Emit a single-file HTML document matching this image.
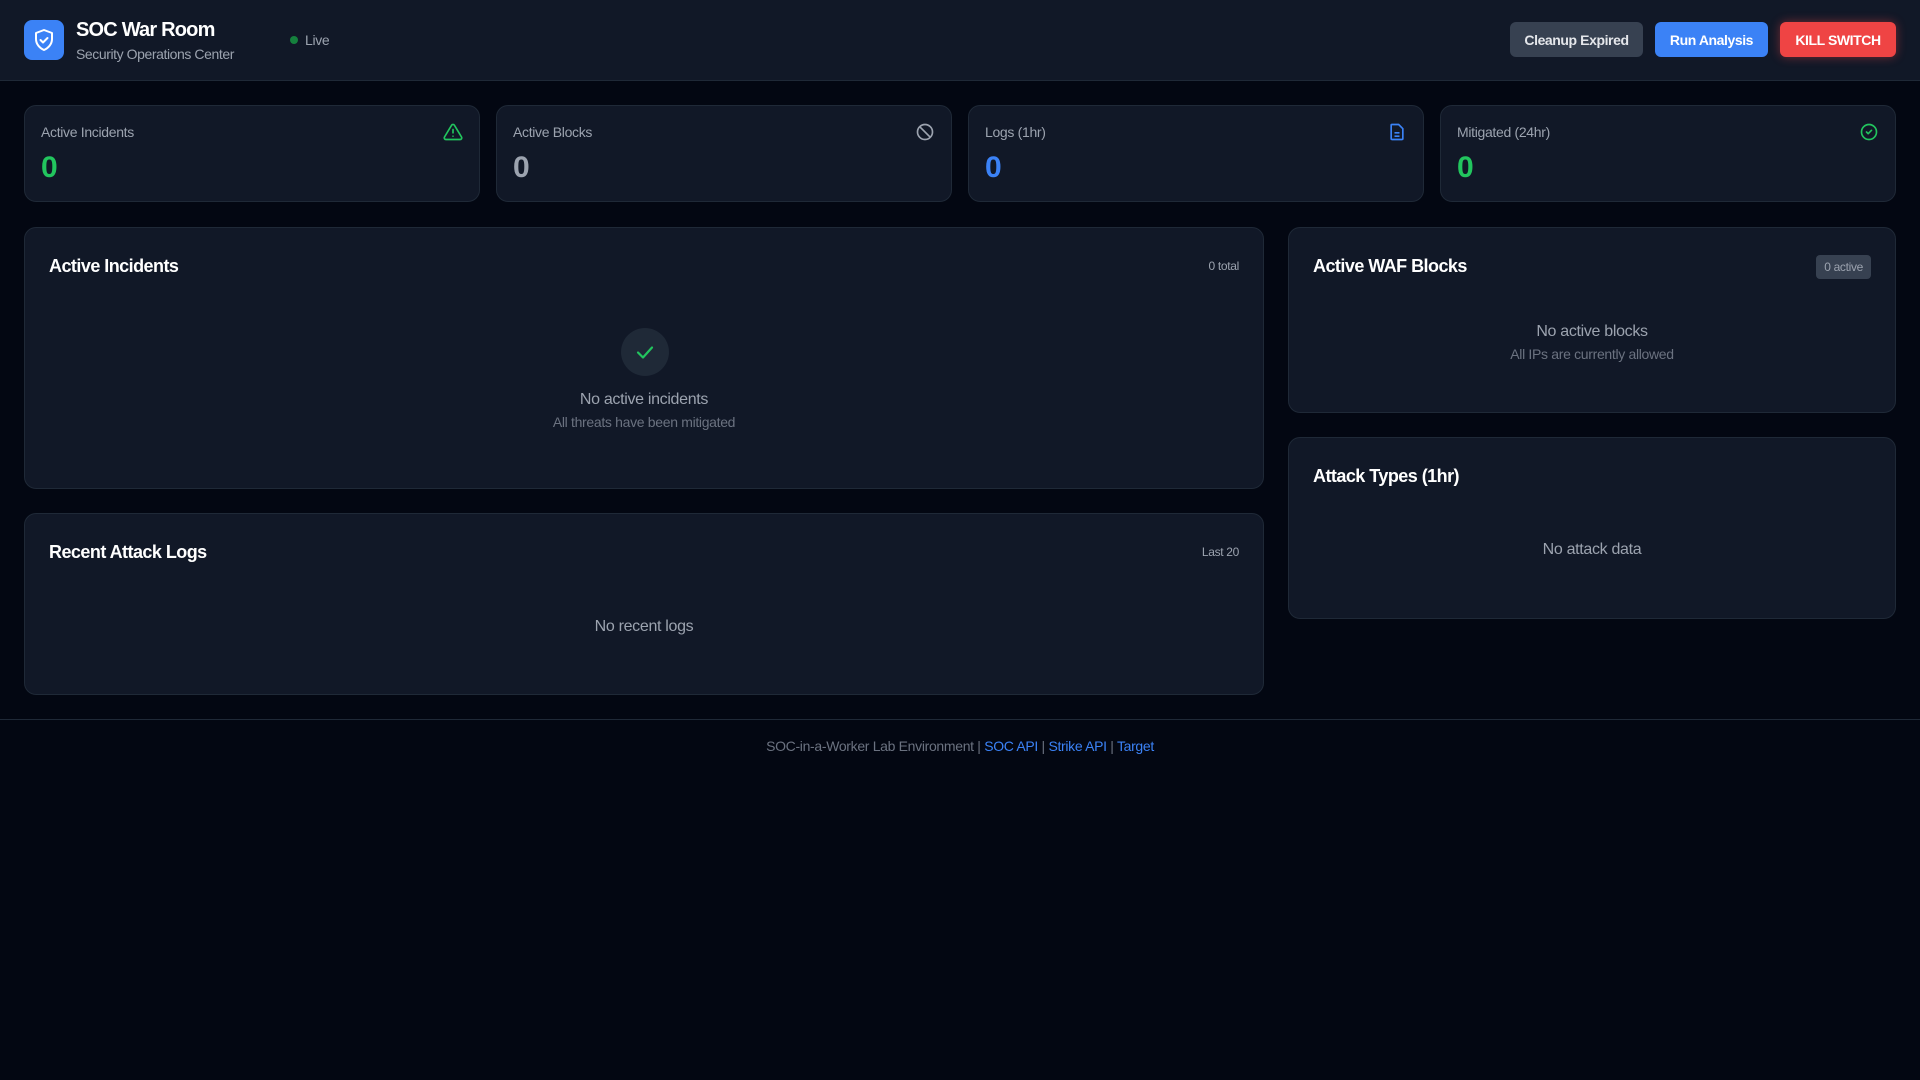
<!DOCTYPE html>
<html><head><meta charset="utf-8"><style>
*{box-sizing:border-box;margin:0;padding:0}
body{width:1920px;height:1080px;background:#030712;font-family:"Liberation Sans",Arial,sans-serif;color:#f3f4f6;position:relative;overflow:hidden;letter-spacing:-0.02em}
.a{position:absolute}
.hdr{left:0;top:0;width:1920px;height:81px;background:#111827;border-bottom:1px solid #1f2937}
.card,.panel{position:absolute;background:#111827;border:1px solid #1f2937;border-radius:12px}
.lbl{position:absolute;left:16px;top:18px;font-size:14px;color:#9ca3af}
.val{position:absolute;left:16px;top:45px;font-size:30px;font-weight:bold}
.ico{position:absolute;right:16px;top:16px}
.pt{position:absolute;left:24px;top:28px;font-size:18px;font-weight:bold;color:#fff;letter-spacing:-0.03em}
.pr{position:absolute;right:24px;top:31px;font-size:12px;color:#9ca3af}
.c{position:absolute;left:0;width:100%;text-align:center}
.btn{position:absolute;top:22px;height:35px;border-radius:6px;font-size:14px;font-weight:bold;color:#fff;text-align:center;line-height:36px;letter-spacing:-0.03em}
a{color:#3b82f6;text-decoration:none}
</style></head><body>
<div class="a hdr">
  <div class="a" style="left:24px;top:20px;width:40px;height:40px;background:#3b82f6;border-radius:8px">
    <svg width="40" height="40" viewBox="0 0 40 40"><path d="M20 10l8 3v6c0 5-3.5 9-8 11-4.5-2-8-6-8-11v-6z" fill="none" stroke="#fff" stroke-width="2" stroke-linejoin="round"/><path d="M16.5 20l2.5 2.5 4.5-4.5" fill="none" stroke="#fff" stroke-width="2" stroke-linecap="round" stroke-linejoin="round"/></svg>
  </div>
  <div class="a" style="left:76px;top:19px;font-size:20px;font-weight:bold;color:#fff;letter-spacing:-0.04em">SOC War Room</div>
  <div class="a" style="left:76px;top:46px;font-size:14px;color:#9ca3af;letter-spacing:-0.03em">Security Operations Center</div>
  <div class="a" style="left:290px;top:36px;width:8px;height:8px;border-radius:50%;background:#15803d"></div>
  <div class="a" style="left:305px;top:32px;font-size:14px;color:#9ca3af">Live</div>
  <div class="btn" style="left:1510px;width:133px;background:#374151;color:#e5e7eb">Cleanup Expired</div>
  <div class="btn" style="left:1655px;width:113px;background:#3b82f6">Run Analysis</div>
  <div class="btn" style="left:1780px;width:116px;background:#ef4444;box-shadow:0 0 10px rgba(239,68,68,.45)">KILL SWITCH</div>
</div>

<div class="card" style="left:24px;top:105px;width:456px;height:97px">
  <div class="lbl">Active Incidents</div><div class="val" style="color:#22c55e">0</div>
  <svg class="ico" width="20" height="20" viewBox="0 0 24 24" fill="none" stroke="#22c55e" stroke-width="2" stroke-linecap="round" stroke-linejoin="round"><path d="M10.3 3.9L1.8 18a2 2 0 001.7 3h17a2 2 0 001.7-3L13.7 3.9a2 2 0 00-3.4 0z"/><path d="M12 9v4M12 17h.01"/></svg>
</div>
<div class="card" style="left:496px;top:105px;width:456px;height:97px">
  <div class="lbl">Active Blocks</div><div class="val" style="color:#9ca3af">0</div>
  <svg class="ico" width="20" height="20" viewBox="0 0 24 24" fill="none" stroke="#9ca3af" stroke-width="2"><circle cx="12" cy="12" r="9"/><path d="M5.6 5.6l12.8 12.8"/></svg>
</div>
<div class="card" style="left:968px;top:105px;width:456px;height:97px">
  <div class="lbl">Logs (1hr)</div><div class="val" style="color:#3b82f6">0</div>
  <svg class="ico" width="20" height="20" viewBox="0 0 24 24" fill="none" stroke="#3b82f6" stroke-width="2" stroke-linejoin="round"><path d="M6 3h8l5 5v12a1 1 0 01-1 1H6a1 1 0 01-1-1V4a1 1 0 011-1z"/><path d="M9 13h6M9 17h6"/></svg>
</div>
<div class="card" style="left:1440px;top:105px;width:456px;height:97px">
  <div class="lbl">Mitigated (24hr)</div><div class="val" style="color:#22c55e">0</div>
  <svg class="ico" width="20" height="20" viewBox="0 0 24 24" fill="none" stroke="#22c55e" stroke-width="2" stroke-linecap="round" stroke-linejoin="round"><circle cx="12" cy="12" r="9"/><path d="M9 12l2 2 4-4"/></svg>
</div>

<div class="panel" style="left:24px;top:227px;width:1240px;height:262px">
  <div class="pt">Active Incidents</div><div class="pr" style="top:31px">0 total</div>
  <div class="a" style="left:596px;top:100px;width:48px;height:48px;border-radius:50%;background:#1f2937"><svg width="48" height="48" viewBox="0 0 48 48"><path d="M17 24.5l5 5 9-10" fill="none" stroke="#22c55e" stroke-width="2.2" stroke-linecap="round" stroke-linejoin="round"/></svg></div>
  <div class="c" style="top:163px;font-size:16px;color:#9ca3af">No active incidents</div>
  <div class="c" style="top:186px;font-size:14px;color:#6b7280">All threats have been mitigated</div>
</div>
<div class="panel" style="left:24px;top:513px;width:1240px;height:182px">
  <div class="pt">Recent Attack Logs</div><div class="pr">Last 20</div>
  <div class="c" style="top:104px;font-size:16px;color:#9ca3af">No recent logs</div>
</div>
<div class="panel" style="left:1288px;top:227px;width:608px;height:186px">
  <div class="pt">Active WAF Blocks</div>
  <div class="a" style="right:24px;top:27px;height:24px;padding:0 8px;line-height:24px;border-radius:4px;background:#374151;font-size:12px;color:#9ca3af">0 active</div>
  <div class="c" style="top:95px;font-size:16px;color:#9ca3af">No active blocks</div>
  <div class="c" style="top:118px;font-size:14px;color:#6b7280">All IPs are currently allowed</div>
</div>
<div class="panel" style="left:1288px;top:437px;width:608px;height:182px">
  <div class="pt">Attack Types (1hr)</div>
  <div class="c" style="top:103px;font-size:16px;color:#9ca3af">No attack data</div>
</div>

<div class="a" style="left:0;top:719px;width:1920px;border-top:1px solid #1f2937"></div>
<div class="c" style="top:738px;font-size:14px;color:#6b7280">SOC-in-a-Worker Lab Environment | <a>SOC API</a> | <a>Strike API</a> | <a>Target</a></div>
</body></html>
